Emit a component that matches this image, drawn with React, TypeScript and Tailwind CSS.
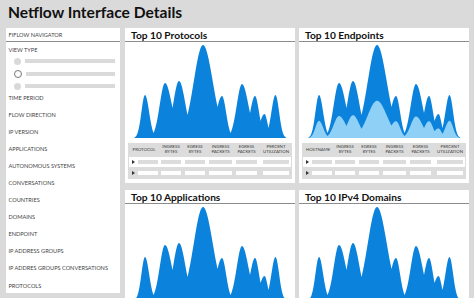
import React from "react";

const PEAKS: [number, number][] = [
  [20, 43], [40, 55], [54, 57], [78, 93], [97, 42], [117, 54], [130, 42], [139.5, 24], [150.5, 43],
];
const VALLEYS: [number, number][] = [
  [9.5, 0.6], [28.5, 5], [47.5, 30], [62.5, 23], [92.5, 31], [105.5, 5], [125, 25], [135.5, 17], [143.5, 10], [161, 0.6],
];
const BASE = 96;

function areaPath(scale: number) {
  const peaks = PEAKS.map(([c, h], i) => {
    const [lx, lh] = VALLEYS[i];
    const [rx, rh] = VALLEYS[i + 1];
    return {
      c,
      h,
      wl: (c - lx) / Math.sqrt(Math.log(h / lh)),
      wr: (rx - c) / Math.sqrt(Math.log(h / rh)),
    };
  });
  const start = VALLEYS[0][0];
  const end = VALLEYS[VALLEYS.length - 1][0];
  let d = `M${start},${BASE}`;
  for (let x = start; x <= end; x += 0.5) {
    let v = 0;
    for (const p of peaks) {
      const w = x < p.c ? p.wl : p.wr;
      const u = (x - p.c) / w;
      v = Math.max(v, p.h * Math.exp(-u * u));
    }
    d += ` L${x.toFixed(1)},${(BASE - v * scale).toFixed(2)}`;
  }
  return d + ` L${end},${BASE} Z`;
}

const DARK = areaPath(1);
const LIGHT = areaPath(0.4);

function Chart({ layered }: { layered?: boolean }) {
  return (
    <svg width="170" height="97" viewBox="0 0 170 97" className="block">
      <path d={DARK} fill="#0b82dc" />
      {layered && <path d={LIGHT} fill="#8fd0f6" />}
    </svg>
  );
}

function Arrow() {
  return (
    <span className="block w-0 h-0 border-y-[2.5px] border-y-transparent border-l-[3.5px] border-l-[#333]" />
  );
}

const COLS = "grid grid-cols-[30px_24px_24px_27px_25px_34px]";

function Row({ alt }: { alt?: boolean }) {
  const bar = alt ? "bg-white" : "bg-[#dcdcdc]";
  return (
    <div className={`${COLS} h-[10px] items-center ${alt ? "bg-[#dcdcdc]" : "bg-white"}`}>
      <div className="flex items-center pl-[3px] pr-[1px] gap-[2.5px]">
        <Arrow />
        <span className={`h-[4px] flex-1 ${bar}`} />
      </div>
      {[0, 1, 2, 3].map((i) => (
        <div key={i} className="px-[2px]">
          <span className={`block h-[4px] ${bar}`} />
        </div>
      ))}
      <div className="px-[4px]">
        <span className={`block h-[4px] ${bar}`} />
      </div>
    </div>
  );
}

function Table({ first }: { first: string }) {
  const heads = [
    ["INGRESS", "BYTES"],
    ["EGRESS", "BYTES"],
    ["INGRESS", "PACKETS"],
    ["EGRESS", "PACKETS"],
    ["PERCENT", "UTILIZATION"],
  ];
  return (
    <div className="mx-[3px] mt-[4px] bg-[#dcdcdc] px-[1px] pb-[1px] text-[#3a3a3a]">
      <div className={`${COLS} h-[14px] items-center text-[4.3px] leading-[4.7px] text-center`}>
        <div>{first}</div>
        {heads.map(([a, b]) => (
          <div key={a + b}>
            {a}
            <br />
            {b}
          </div>
        ))}
      </div>
      <Row />
      <div className="h-[1px]" />
      <Row alt />
    </div>
  );
}

function Panel({ title, first, layered }: { title: string; first?: string; layered?: boolean }) {
  return (
    <div className={first ? "h-[155px] bg-white" : "h-[120px] bg-white"}>
      <div className="h-[14px] border-b border-[#8c8c8c] pl-[6px] text-[10.2px] font-bold leading-[14px] text-[#111]">
        {title}
      </div>
      <Chart layered={layered} />
      {first && <Table first={first} />}
    </div>
  );
}

const NAV = [
  "TIME PERIOD",
  "FLOW DIRECTION",
  "IP VERSION",
  "APPLICATIONS",
  "AUTONOMOUS SYSTEMS",
  "CONVERSATIONS",
  "COUNTRIES",
  "DOMAINS",
  "ENDPOINT",
  "IP ADDRESS GROUPS",
  "IP ADDRES GROUPS CONVERSATIONS",
  "PROTOCOLS",
];

function Sidebar() {
  return (
    <aside className="w-[114px] h-[265px] bg-white text-[5.6px] text-[#3f3f3f]">
      <div className="h-[14px] border-b border-[#8c8c8c] pl-[2.5px] leading-[13px]">FIFLOW NAVIGATOR</div>
      <div className="pl-[2.5px] pt-[3px] h-[13px] leading-[10px]">VIEW TYPE</div>
      <div className="flex flex-col">
        {[0, 1, 2].map((i) => (
          <div key={i} className="h-[12.5px] flex items-center pl-[8px] gap-[4px] pr-[5px]">
            {i === 1 ? (
              <span className="w-[8px] h-[8px] rounded-full border border-[#777] bg-white -ml-[0.5px]" />
            ) : (
              <span className="w-[7px] h-[7px] rounded-full bg-[#d9d9d9]" />
            )}
            <span className="h-[4px] flex-1 bg-[#dadada]" />
          </div>
        ))}
      </div>
      <ul className="flex flex-col gap-[7.6px] pl-[2.5px] leading-[9.5px]">
        {NAV.map((n) => (
          <li key={n}>{n}</li>
        ))}
      </ul>
    </aside>
  );
}

export default function App() {
  return (
    <div className="w-[474px] h-[298px] overflow-hidden bg-[#dadada] font-['Lato',sans-serif]">
      <h1 className="h-[28px] pl-[8px] pt-[2px] text-[15.6px] font-bold leading-[20px] text-[#111]">
        Netflow Interface Details
      </h1>
      <div className="flex gap-[5px] pl-[6px]">
        <Sidebar />
        <div className="grid grid-cols-[170px_170px] gap-x-[4px] gap-y-[7px]">
          <Panel title="Top 10 Protocols" first="PROTOCOL" />
          <Panel title="Top 10 Endpoints" first="HOSTNAME" layered />
          <Panel title="Top 10 Applications" />
          <Panel title="Top 10 IPv4 Domains" />
        </div>
      </div>
    </div>
  );
}
